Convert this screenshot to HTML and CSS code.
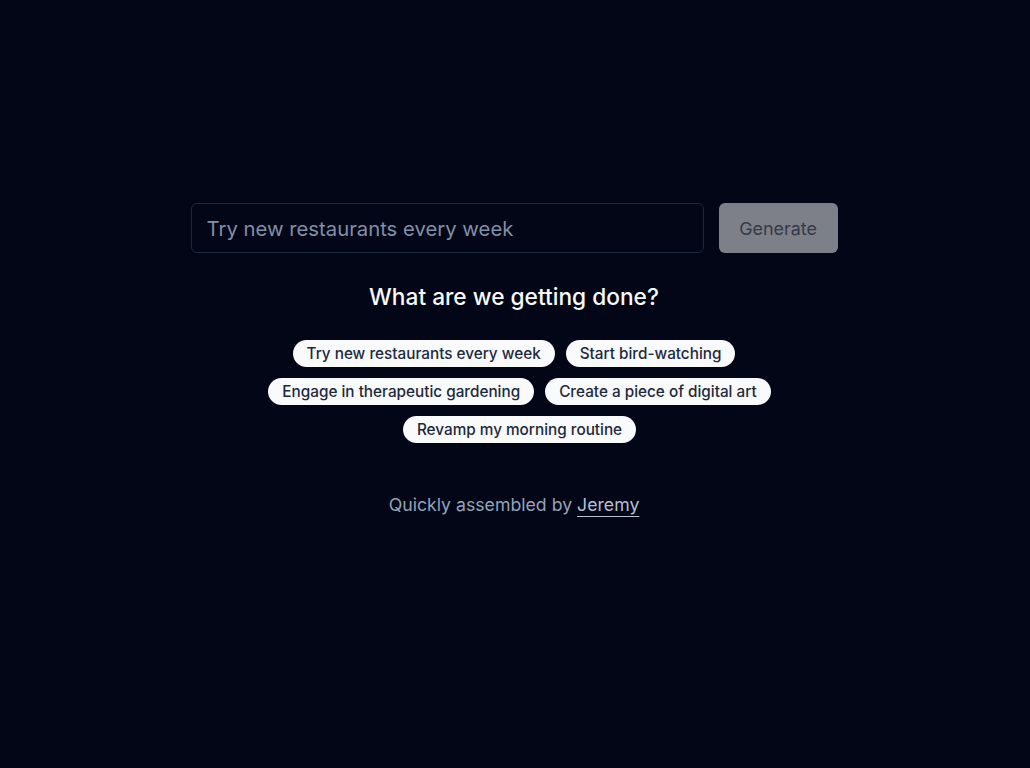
FILE: index.html
```html
<!DOCTYPE html>
<html>
<head>
<meta charset="utf-8">
<link rel="stylesheet" href="styles.css">
</head>
<body>
<main class="page">
  <form class="bar">
    <input class="goal" type="text" placeholder="Try new restaurants every week">
    <button class="gen" type="button" disabled>Generate</button>
  </form>
  <h1 class="title">What are we getting done?</h1>
  <div class="chips">
    <span class="chip">Try new restaurants every week</span>
    <span class="chip">Start bird-watching</span>
    <span class="chip">Engage in therapeutic gardening</span>
    <span class="chip">Create a piece of digital art</span>
    <span class="chip">Revamp my morning routine</span>
  </div>
  <p class="footer">Quickly assembled by <a class="link" href="#">Jeremy</a></p>
</main>
</body>
</html>
```
FILE: styles.css
```css
html, body {
  margin: 0;
  padding: 0;
  background: #020617;
  height: 100%;
}
body {
  font-family: Inter, "Noto Sans", sans-serif;
  color: #f1f5f9;
}
.page {
  display: flex;
  flex-direction: column;
  align-items: center;
  padding-top: 203px;
  padding-right: 2px;
}
.bar {
  display: flex;
  gap: 15px;
  width: 647px;
  margin: 0;
}
.goal {
  flex: 1;
  height: 50px;
  box-sizing: border-box;
  background: #020617;
  border: 1px solid #1e293b;
  border-radius: 6px;
  padding: 0 15px;
  font-family: Inter, sans-serif;
  font-size: 20.3px;
  color: #e2e8f0;
  outline: none;
}
.goal::placeholder {
  color: #8190a8;
}
.gen {
  width: 119px;
  height: 50px;
  border: none;
  border-radius: 6px;
  background: #7d8089;
  color: #343a48;
  font-family: Inter, sans-serif;
  font-size: 17.9px;
  font-weight: 400;
}
.title {
  margin: 30px 0 0;
  font-size: 22.7px;
  font-weight: 500;
  line-height: 28px;
  color: #f8fafc;
}
.chips {
  margin-top: 29px;
  width: 600px;
  display: flex;
  flex-wrap: wrap;
  justify-content: center;
  row-gap: 11px;
}
.chip {
  background: #f8fafc;
  color: #1e293b;
  border-radius: 999px;
  padding: 0 14px;
  height: 27px;
  line-height: 27px;
  font-size: 15.3px;
  font-weight: 500;
  margin-left: 11px;
}
.chip:first-child {
  margin-left: 0;
}
.footer {
  margin: 50px 0 0;
  font-size: 17.7px;
  line-height: 24px;
  color: #94a3b8;
}
.link {
  color: #b4c0d0;
  text-decoration: underline;
  text-underline-offset: 5px;
  text-decoration-thickness: 1px;
}
```
